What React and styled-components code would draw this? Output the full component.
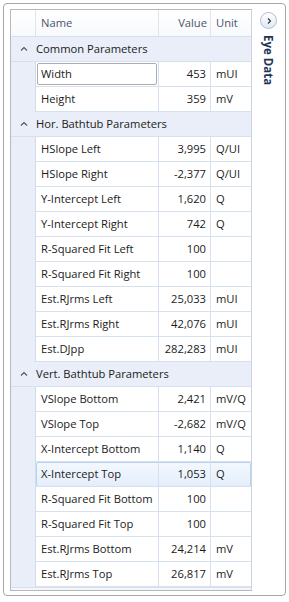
import React from 'react'
import styled, { createGlobalStyle } from 'styled-components'

const GlobalStyle = createGlobalStyle`
  html, body {
    margin: 0;
    padding: 0;
    background: #ffffff;
  }
  body {
    font-family: "Open Sans", "Noto Sans", sans-serif;
    font-size: 11.2px;
    color: #1b1b1b;
  }
`

const groups = [
  {
    title: 'Common Parameters',
    rows: [
      { name: 'Width', value: '453', unit: 'mUI', editing: true },
      { name: 'Height', value: '359', unit: 'mV' }
    ]
  },
  {
    title: 'Hor. Bathtub Parameters',
    rows: [
      { name: 'HSlope Left', value: '3,995', unit: 'Q/UI' },
      { name: 'HSlope Right', value: '-2,377', unit: 'Q/UI' },
      { name: 'Y-Intercept Left', value: '1,620', unit: 'Q' },
      { name: 'Y-Intercept Right', value: '742', unit: 'Q' },
      { name: 'R-Squared Fit Left', value: '100', unit: '' },
      { name: 'R-Squared Fit Right', value: '100', unit: '' },
      { name: 'Est.RJrms Left', value: '25,033', unit: 'mUI' },
      { name: 'Est.RJrms Right', value: '42,076', unit: 'mUI' },
      { name: 'Est.DJpp', value: '282,283', unit: 'mUI' }
    ]
  },
  {
    title: 'Vert. Bathtub Parameters',
    rows: [
      { name: 'VSlope Bottom', value: '2,421', unit: 'mV/Q' },
      { name: 'VSlope Top', value: '-2,682', unit: 'mV/Q' },
      { name: 'X-Intercept Bottom', value: '1,140', unit: 'Q' },
      { name: 'X-Intercept Top', value: '1,053', unit: 'Q', hover: true },
      { name: 'R-Squared Fit Bottom', value: '100', unit: '' },
      { name: 'R-Squared Fit Top', value: '100', unit: '' },
      { name: 'Est.RJrms Bottom', value: '24,214', unit: 'mV' },
      { name: 'Est.RJrms Top', value: '26,817', unit: 'mV' }
    ]
  }
]

const Frame = styled.div`
  margin: 3px 0 0 3px;
  width: 283px;
  height: 593px;
  box-sizing: border-box;
  border: 1px solid #a7a7a7;
  border-radius: 4px;
  display: flex;
  padding: 5px 0 0 6px;
`

const Grid = styled.div`
  width: 242px;
  height: 582px;
  box-sizing: border-box;
  border: 1px solid #b9b9b9;
  border-right-color: #c9d3e2;
  display: flex;
  flex-direction: column;
  background: #ffffff;
`

const Columns = styled.div`
  display: grid;
  grid-template-columns: 25px 123px 52px 40px;
`

const HeaderRow = styled(Columns)`
  height: 27px;
  box-sizing: border-box;
  border-bottom: 1px solid #d5dfee;
  background: linear-gradient(#ffffff, #f7f9fc);
`

const HeaderCell = styled.div`
  display: flex;
  align-items: center;
  justify-content: ${({ $right }) => ($right ? 'flex-end' : 'flex-start')};
  padding: 0 ${({ $right }) => ($right ? '3px' : '5px')} 1px 5px;
  color: #4a5568;
  border-right: ${({ $last }) => ($last ? 'none' : '1px solid #e0e5ec')};
`

const GroupRow = styled.div`
  height: 25px;
  box-sizing: border-box;
  display: flex;
  align-items: center;
  padding-bottom: 1px;
  background: #e9eef8;
  border-bottom: 1px solid #d6e0ef;
`

const Toggle = styled.div`
  width: 25px;
  display: flex;
  justify-content: center;
  align-items: center;
`

const DataRow = styled(Columns)`
  height: 25px;
  position: relative;
`

const Indent = styled.div`
  background: #e9eef8;
  border-right: 1px solid #d0dbec;
`

const Cell = styled.div`
  position: relative;
  display: flex;
  align-items: center;
  justify-content: ${({ $right }) => ($right ? 'flex-end' : 'flex-start')};
  padding: 0 ${({ $right }) => ($right ? '4px' : '5px')} 1px 5px;
  border-bottom: 1px solid #d6e1f0;
  border-right: ${({ $last }) => ($last ? 'none' : '1px solid #d6e1f0')};
  white-space: nowrap;
  overflow: hidden;
`

const EditBox = styled.div`
  flex: 1;
  align-self: stretch;
  margin: 1px -4px 0 -4px;
  border: 1px solid #abadb3;
  border-radius: 2px;
  padding: 0 0 1px 3px;
  display: flex;
  align-items: center;
`

const HoverOutline = styled.div`
  position: absolute;
  left: 25px;
  right: 0;
  top: 0;
  bottom: 0;
  border: 1px solid #b8d2ef;
  border-radius: 2px;
  background: linear-gradient(#f3f8fe, #e4eefb);
`

const Footer = styled.div`
  flex: 1;
  border-top: 1px solid #d6e1f0;
  background: #f4f6fa;
`

const Side = styled.div`
  flex: 1;
  display: flex;
  flex-direction: column;
  align-items: center;
  padding-top: 3px;
`

const RoundButton = styled.div`
  width: 17px;
  height: 17px;
  box-sizing: border-box;
  border-radius: 50%;
  border: 1px solid #aebdd3;
  background: linear-gradient(#ffffff, #dfe8f5);
  display: flex;
  align-items: center;
  justify-content: center;
`

const SideTitle = styled.div`
  writing-mode: vertical-rl;
  font-weight: 700;
  font-size: 11.5px;
  color: #1c3559;
  margin-top: 6px;
`

const Caret = () => (
  <svg width="8" height="6" viewBox="0 0 8 6">
    <polyline points="1,4.5 4,1.5 7,4.5" fill="none" stroke="#555" strokeWidth="1.1" />
  </svg>
)

const Row = ({ row }) => (
  <DataRow>
    {row.hover && <HoverOutline />}
    <Indent />
    <Cell>
      {row.editing ? <EditBox>{row.name}</EditBox> : row.name}
    </Cell>
    <Cell $right>{row.value}</Cell>
    <Cell $last>{row.unit}</Cell>
  </DataRow>
)

const App = () => {
  return (
    <>
      <GlobalStyle />
      <Frame>
        <Grid>
          <HeaderRow>
            <HeaderCell />
            <HeaderCell>Name</HeaderCell>
            <HeaderCell $right>Value</HeaderCell>
            <HeaderCell $last>Unit</HeaderCell>
          </HeaderRow>
          {groups.map(g => (
            <React.Fragment key={g.title}>
              <GroupRow>
                <Toggle><Caret /></Toggle>
                <div>{g.title}</div>
              </GroupRow>
              {g.rows.map(r => <Row key={r.name} row={r} />)}
            </React.Fragment>
          ))}
          <Footer />
        </Grid>
        <Side>
          <RoundButton>
            <svg width="8" height="8" viewBox="0 0 8 8">
              <polyline points="3,1.5 5.5,4 3,6.5" fill="none" stroke="#333" strokeWidth="1.1" />
            </svg>
          </RoundButton>
          <SideTitle>Eye Data</SideTitle>
        </Side>
      </Frame>
    </>
  )
}

export default App
